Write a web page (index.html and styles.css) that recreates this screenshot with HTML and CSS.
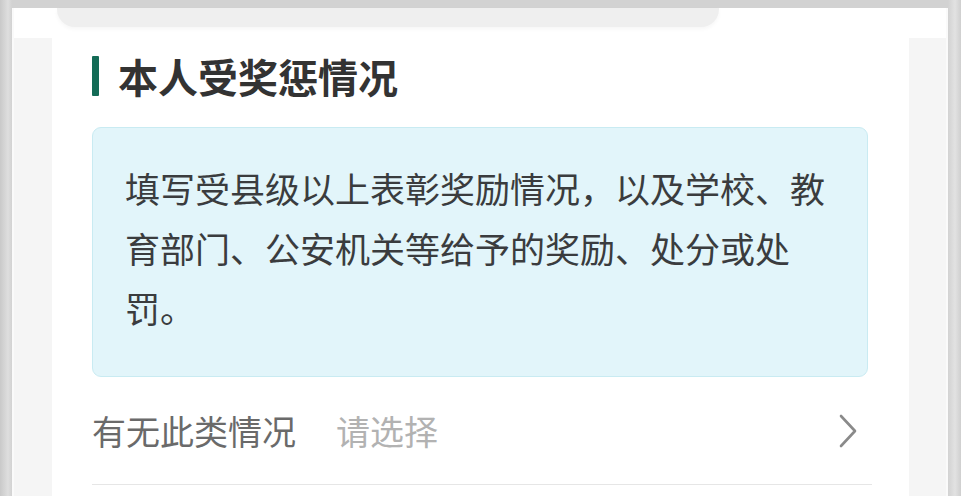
FILE: index.html
```html
<!DOCTYPE html>
<html lang="zh-CN">
<head>
<meta charset="utf-8">
<link rel="stylesheet" href="styles.css">
</head>
<body>
<div class="screen">
  <div class="top-band">
    <div class="prev-card"></div>
  </div>
  <div class="main">
    <div class="card">
      <div class="section-title">
        <span class="bar"></span>
        <h2>本人受奖惩情况</h2>
      </div>
      <div class="notice">
        填写受县级以上表彰奖励情况，以及学校、教育部门、公安机关等给予的奖励、处分或处罚。
      </div>
      <div class="field-row">
        <span class="label">有无此类情况</span>
        <span class="placeholder">请选择</span>
        <svg class="chevron" width="20" height="36" viewBox="0 0 20 36">
          <path d="M3 3 L17 18 L3 33" fill="none" stroke="#8a8a8a" stroke-width="2.6" stroke-linecap="round" stroke-linejoin="round"/>
        </svg>
      </div>
    </div>
  </div>
</div>
</body>
</html>
```

FILE: styles.css
```css
html, body {
  margin: 0;
  padding: 0;
  height: 100%;
}
body {
  background: linear-gradient(to right, #c9c9c9 0, #dedede 8px, #d2d2d2 12px, #d2d2d2 calc(100% - 13px), #e2e2e2 calc(100% - 6px), #cfcfcf 100%);
  font-family: "Noto Sans CJK SC", "Noto Sans", sans-serif;
  overflow: hidden;
}
.screen {
  margin: 8px 13px 0 12px;
  height: calc(100% - 8px);
  background: #ffffff;
  border-left: 2px solid #fafafa;
  border-right: 2px solid #fafafa;
  display: flex;
  flex-direction: column;
}
.top-band {
  height: 30px;
  flex: none;
  background: #ffffff;
}
.prev-card {
  margin-left: 43px;
  width: 662px;
  height: 19px;
  background: #efefef;
  border-radius: 0 0 18px 18px;
  box-shadow: 0 2px 4px rgba(0,0,0,0.04);
}
.main {
  flex: 1;
  display: flex;
  background: #f5f5f5;
  padding: 0 37px 0 38px;
}
.card {
  flex: 1;
  background: #ffffff;
  padding: 18px 41px 0 40px;
}
.section-title {
  display: flex;
  align-items: center;
  gap: 19px;
  height: 40px;
}
.bar {
  width: 7px;
  height: 40px;
  background: #136b56;
  border-radius: 1px;
}
.section-title h2 {
  margin: 0;
  font-size: 40px;
  line-height: 40px;
  font-weight: 700;
  color: #333333;
}
.notice {
  margin-top: 31px;
  background: #e2f5fa;
  border: 1px solid #c9ebf2;
  border-radius: 9px;
  padding: 30px 38px 38px 32px;
  font-size: 35px;
  line-height: 60px;
  color: #3a3c3e;
}
.field-row {
  display: flex;
  align-items: center;
  height: 107px;
  border-bottom: 1px solid #e6e6e6;
  margin-right: -4px;
}
.label {
  font-size: 34px;
  color: #6a6a6a;
}
.placeholder {
  margin-left: 40px;
  font-size: 34px;
  color: #b2b2b2;
}
.chevron {
  margin-left: auto;
  margin-right: 14px;
}
```
